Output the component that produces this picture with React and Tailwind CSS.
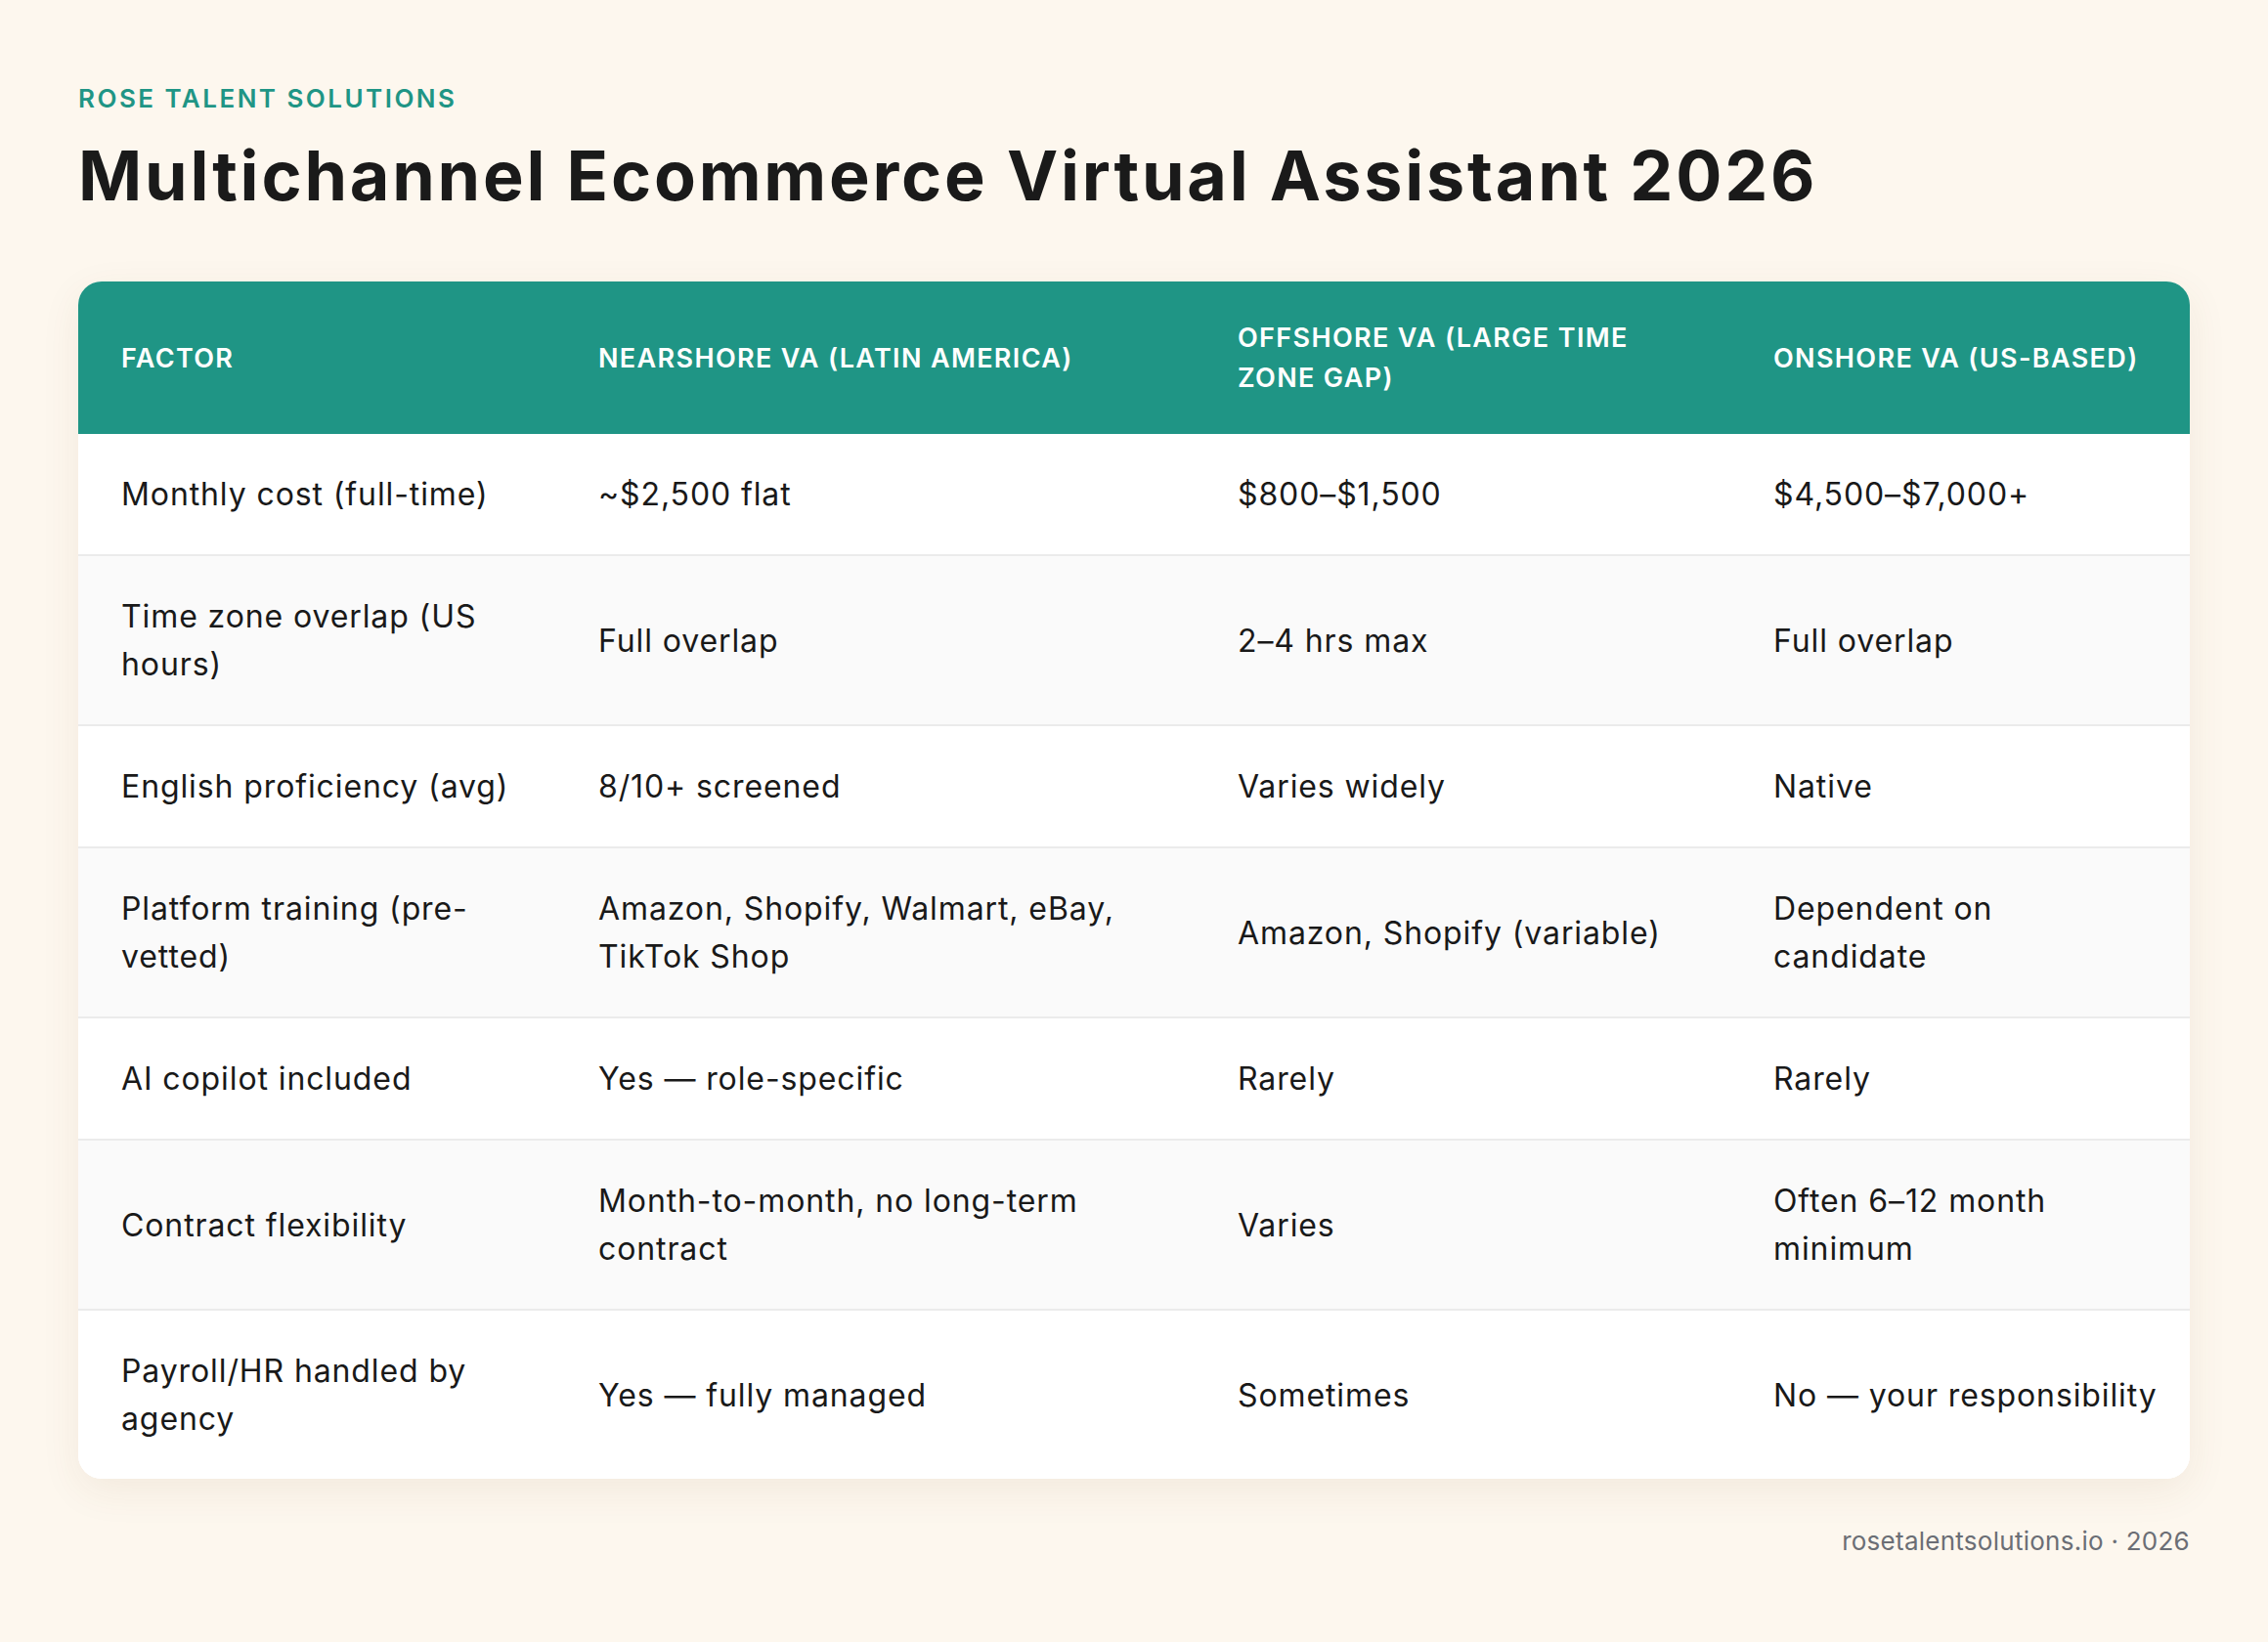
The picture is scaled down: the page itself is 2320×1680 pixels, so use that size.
const columns = [
  { label: 'Factor', width: 'w-[488px]' },
  { label: 'Nearshore VA (Latin America)', width: 'w-[654px]' },
  { label: ['Offshore VA (Large Time', 'Zone Gap)'], width: 'w-[548px]' },
  { label: 'Onshore VA (US-Based)', width: 'w-[470px]' },
]

const rows = [
  ['Monthly cost (full-time)', '~$2,500 flat', '$800–$1,500', '$4,500–$7,000+'],
  [['Time zone overlap (US', 'hours)'], 'Full overlap', '2–4 hrs max', 'Full overlap'],
  ['English proficiency (avg)', '8/10+ screened', 'Varies widely', 'Native'],
  [['Platform training (pre-', 'vetted)'], ['Amazon, Shopify, Walmart, eBay,', 'TikTok Shop'], 'Amazon, Shopify (variable)', ['Dependent on', 'candidate']],
  ['AI copilot included', 'Yes — role-specific', 'Rarely', 'Rarely'],
  ['Contract flexibility', ['Month-to-month, no long-term', 'contract'], 'Varies', ['Often 6–12 month', 'minimum']],
  [['Payroll/HR handled by', 'agency'], 'Yes — fully managed', 'Sometimes', 'No — your responsibility'],
]

function Lines({ value }) {
  if (!Array.isArray(value)) return value
  return value.map((line, i) => (
    <span key={i} className="block">{line}</span>
  ))
}

export default function App() {
  return (
    <div className="min-h-screen w-full bg-[#fdf7ee] px-[80px] pt-[84px] pb-[30px] font-['Inter','Noto_Sans',sans-serif] text-[#1c1c1c]">
      {/* Heading */}
      <div className="text-[26px] leading-[34px] font-semibold tracking-[0.095em] uppercase text-[#1f9585]">
        Rose Talent Solutions
      </div>
      <h1 className="mt-[22px] text-[70px] leading-[80px] font-bold tracking-[0.04em] text-[#1a1a1a]">
        Multichannel Ecommerce Virtual Assistant 2026
      </h1>

      {/* Comparison table */}
      <div className="mt-[68px] w-[2160px] rounded-[24px] overflow-hidden bg-white shadow-[0_12px_40px_rgba(110,80,40,0.08)]">
        <table className="w-full table-fixed border-collapse">
          <colgroup>
            {columns.map((c, i) => (
              <col key={i} className={c.width} />
            ))}
          </colgroup>
          <thead>
            <tr className="bg-[#1f9585] h-[156px]">
              {columns.map((c, i) => (
                <th
                  key={i}
                  className="px-[44px] text-left align-middle text-[27px] leading-[41px] font-semibold uppercase tracking-[0.05em] whitespace-nowrap text-white"
                >
                  <Lines value={c.label} />
                </th>
              ))}
            </tr>
          </thead>
          <tbody>
            {rows.map((row, r) => (
              <tr
                key={r}
                className={`${r % 2 === 1 ? 'bg-[#fafafa]' : 'bg-white'} ${r < rows.length - 1 ? 'border-b-2 border-[#ebebeb]' : ''}`}
              >
                {row.map((cell, c) => (
                  <td
                    key={c}
                    className="px-[44px] py-[37px] align-middle text-[32px] leading-[49px] tracking-[0.028em] whitespace-nowrap text-[#191919]"
                  >
                    <Lines value={cell} />
                  </td>
                ))}
              </tr>
            ))}
          </tbody>
        </table>
      </div>

      {/* Footer */}
      <div className="w-[2160px] mt-[46px] text-right text-[26px] leading-[36px] tracking-[0.01em] text-[#6b6e75]">
        rosetalentsolutions.io · 2026
      </div>
    </div>
  )
}
